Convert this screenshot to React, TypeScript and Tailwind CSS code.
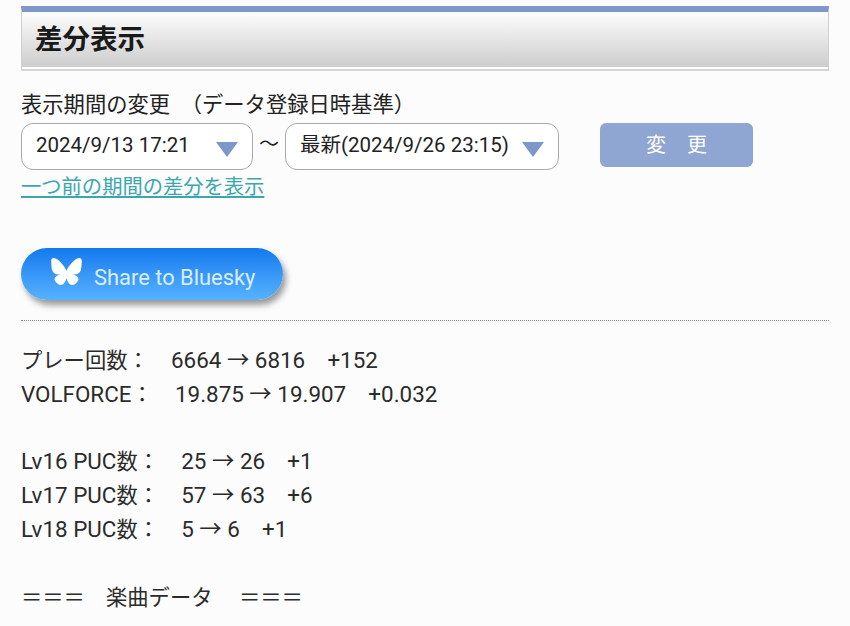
const font = "font-['Roboto','Noto_Sans_CJK_JP',sans-serif]";

// the kana and kanji in these rows sit a little smaller than the latin digits
const Cjk = ({ children }: { children: string }) => <span className="text-[21.3px]">{children}</span>;

const Arrow = () => (
  <span className="w-0 h-0 border-x-[11px] border-x-transparent border-t-[15px] border-t-[#7c97cb] mt-[5px]" />
);

const Select = ({ label, width }: { label: string; width: string }) => (
  <div className={`${width} h-[47px] bg-white border-[1.5px] border-[#a9a9a9] rounded-[12px] flex items-center justify-between pl-[14px] pr-[14px] text-[20.5px] text-[#222]`}>
    <span className="whitespace-nowrap pb-[2px]">{label}</span>
    <Arrow />
  </div>
);

const BlueskyIcon = () => (
  <svg viewBox="0 0 568 501" className="w-[31px] h-[27px] fill-white mb-[5px]">
    <path d="M123.121 33.664C188.241 82.553 258.281 181.68 284 234.873c25.719-53.192 95.759-152.32 160.879-201.21C491.866-1.611 568-28.906 568 57.947c0 17.346-9.945 145.713-15.778 166.555-20.275 72.453-94.155 90.933-159.875 79.748C507.222 323.8 536.444 388.56 473.333 453.32c-119.86 122.992-172.272-30.859-185.702-70.281-2.462-7.227-3.614-10.608-3.631-7.733-.017-2.875-1.169.506-3.631 7.733-13.43 39.422-65.842 193.273-185.702 70.281-63.111-64.76-33.889-129.52 80.986-149.071-65.72 11.185-139.6-7.295-159.875-79.748C9.945 203.659 0 75.291 0 57.946 0-28.906 76.135-1.612 123.121 33.664Z" />
  </svg>
);

export default function App() {
  return (
    <div className={`${font} w-[850px] h-[626px] overflow-hidden bg-[#fcfcfc] pt-[6px] px-[21px] text-[#222]`}>
      <div className="w-[808px] h-[65px] border-t-[6px] border-t-[#7f98c8] border-x border-x-[#cfcfcf] border-b-[2px] border-b-[#d5d5d5]">
        <div className="h-full border-b-[2px] border-white bg-gradient-to-b from-[#fdfdfd] to-[#cdcdcd] flex items-center pl-[13px]">
          <h2 className="text-[27.5px] font-bold text-[#1a1a1a]">差分表示</h2>
        </div>
      </div>

      <p className="mt-[20px] text-[21.3px] leading-[28px] whitespace-pre">表示期間の変更　（データ登録日時基準）</p>

      <div className="mt-[4px] flex items-start">
        <Select label="2024/9/13 17:21" width="w-[232px]" />
        <span className="w-[32px] text-center text-[20px] leading-[43px]">～</span>
        <Select label="最新(2024/9/26 23:15)" width="w-[274px]" />
        <button className="ml-[41px] w-[153px] h-[44px] bg-[#8fa6d3] rounded-[6px] text-white text-[20px] tracking-[0.4em] pl-[0.4em] whitespace-pre">
          変 更
        </button>
      </div>

      <a className="block mt-[3px] text-[20.3px] leading-[28px] text-[#3ba7ad] underline">一つ前の期間の差分を表示</a>

      <div className="mt-[47px] w-[262px] h-[52px] rounded-full bg-gradient-to-b from-[#1279ee] to-[#57b2ff] shadow-[3px_5px_6px_rgba(0,0,0,0.4)] flex items-center pl-[30px] gap-[12px]">
        <BlueskyIcon />
        <span className="text-[21.9px] text-[#d9efff] mt-[8px]">Share to Bluesky</span>
      </div>

      <div className="mt-[20px] border-t border-dotted border-[#888]" />

      <div className="mt-[23px] text-[22.4px] text-[#2b2b2b] whitespace-pre">
        <div className="h-[33.8px] leading-[33.8px]"><Cjk>プレー回数：</Cjk>{"    6664 → 6816    +152"}</div>
        <div className="h-[33.8px] leading-[33.8px]">VOLFORCE<Cjk>：</Cjk>{"    19.875 → 19.907    +0.032"}</div>
        <div className="h-[33.8px]" />
        <div className="h-[33.8px] leading-[33.8px]">Lv16 PUC<Cjk>数：</Cjk>{"    25 → 26    +1"}</div>
        <div className="h-[33.8px] leading-[33.8px]">Lv17 PUC<Cjk>数：</Cjk>{"    57 → 63    +6"}</div>
        <div className="h-[33.8px] leading-[33.8px]">Lv18 PUC<Cjk>数：</Cjk>{"    5 → 6    +1"}</div>
        <div className="h-[33.8px]" />
        <div className="h-[33.8px] leading-[33.8px] text-[21.3px]">{"＝＝＝    楽曲データ     ＝＝＝"}</div>
      </div>
    </div>
  );
}
